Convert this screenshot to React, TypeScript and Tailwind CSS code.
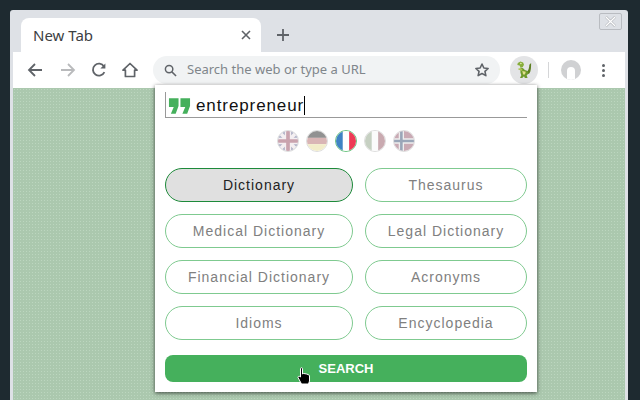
import React from "react";

const leftWords = ["Medical Dictionary", "Financial Dictionary", "Idioms"];
const rightWords = ["Legal Dictionary", "Acronyms", "Encyclopedia"];

const Flag = ({ children, active }: { children: React.ReactNode; active?: boolean }) => (
  <div className={`w-[22px] h-[22px] rounded-full border-[1.5px] overflow-hidden ${active ? "border-[#6cc481]" : "border-[#dddddd]"}`}>
    <svg viewBox="0 0 19 19" className="w-full h-full block">
      {children}
    </svg>
  </div>
);

const Pill = ({ label, active }: { label: string; active?: boolean }) => (
  <div
    className={`h-[34px] rounded-full border flex items-center justify-center text-[14px] tracking-[1px] ${
      active ? "bg-[#e0e0e0] border-[#1d8a3a] text-[#222]" : "bg-white border-[#7fca90] text-[#808080]"
    }`}
  >
    {label}
  </div>
);

export default function App() {
  return (
    <div className="relative w-[640px] h-[400px] overflow-hidden bg-[#1e2a30] pt-[10px] pl-[10px] font-['Noto_Sans',sans-serif]">
      <div className="w-[618px] h-[390px] rounded-t-[3px] bg-[#dee1e6] flex flex-col px-[3px]">
        {/* Tab strip */}
        <div className="h-[42px] flex items-end shrink-0 relative">
          <div className="ml-[8px] w-[240px] h-[34px] bg-white rounded-t-[8px] flex items-center pl-[12px] pr-[10px] text-[15px] text-[#3c4043]">
            <span>New Tab</span>
            <svg viewBox="0 0 10 10" className="ml-auto w-[10px] h-[10px]" stroke="#5f6368" strokeWidth="1.6">
              <path d="M1 1l8 8M9 1l-8 8" />
            </svg>
          </div>
          <svg viewBox="0 0 14 14" className="ml-[15px] mb-[10px] w-[14px] h-[14px]" stroke="#5f6368" strokeWidth="1.8">
            <path d="M7 1v12M1 7h12" />
          </svg>
          <div className="absolute right-[3px] top-[3px] w-[23px] h-[17px] border border-[#b9bcc1] rounded-[2px] flex items-center justify-center">
            <svg viewBox="0 0 12 12" className="w-[11px] h-[11px]" stroke="#fff" strokeWidth="1.5" fill="none">
              <path d="M1 1l10 10M11 1L1 11" stroke="#a9acb1" strokeWidth="2.6" />
              <path d="M1 1l10 10M11 1L1 11" />
            </svg>
          </div>
        </div>

        {/* Toolbar */}
        <div className="h-[36px] bg-white flex items-center shrink-0 text-[#5f6368]">
          <svg viewBox="0 0 16 16" className="ml-[14px] w-[16px] h-[16px]" fill="none" stroke="#5f6368" strokeWidth="1.8">
            <path d="M15 8H2M8 2L2 8l6 6" />
          </svg>
          <svg viewBox="0 0 16 16" className="ml-[17px] w-[16px] h-[16px]" fill="none" stroke="#b9babc" strokeWidth="1.8">
            <path d="M1 8h13M8 2l6 6-6 6" />
          </svg>
          <svg viewBox="0 0 16 16" className="ml-[15px] w-[16px] h-[16px]" fill="none" stroke="#5f6368" strokeWidth="1.8">
            <path d="M13.4 10.2A6 6 0 1 1 13 4.400" />
            <path d="M14.400 1.400v5h-5z" fill="#5f6368" stroke="none" />
          </svg>
          <svg viewBox="0 0 16 16" className="ml-[15px] w-[16px] h-[16px]" fill="none" stroke="#5f6368" strokeWidth="1.7">
            <path d="M8 1.500L1 8.200h2.400V14.500h9.200V8.200H15z" strokeLinejoin="round" />
          </svg>
          <div className="ml-[15px] w-[347px] h-[28px] rounded-full bg-[#f1f3f4] flex items-center pl-[11px] pr-[10px]">
            <svg viewBox="0 0 14 14" className="w-[13px] h-[13px]" fill="none" stroke="#5f6368" strokeWidth="1.6">
              <circle cx="5.500" cy="5.500" r="4" />
              <path d="M8.500 8.500l4.500 4.500" />
            </svg>
            <span className="ml-[10px] text-[13px] text-[#80868b]">Search the web or type a URL</span>
            <svg viewBox="0 0 24 24" className="ml-auto w-[16px] h-[16px]" fill="none" stroke="#5f6368" strokeWidth="2.400">
              <path d="M12 3l2.800 6 6.400.7-4.800 4.400 1.400 6.400-5.800-3.300-5.800 3.300 1.400-6.400L2.800 9.700l6.400-.7z" strokeLinejoin="round" />
            </svg>
          </div>
          <div className="ml-[10px] w-[28px] h-[28px] rounded-full bg-[#e3e4e6] flex items-center justify-center">
            <svg viewBox="0 0 18 20" className="w-[16px] h-[18px]">
              <path d="M12 12c2-1 3-5 3-8l2-2c0 4 0 9-2 12l-3 1z" fill="#5d7f22" />
              <path d="M5 7l3 1 2 2 3 1 1 3-2 2 1 3H10l-1-2-2 2H4.500l1.500-3-1-3z" fill="#6f9a2c" />
              <path d="M2 2l3-1.500 3 1L9 4 7.500 7H5L4 5 1.500 4.500z" fill="#86ad3a" />
              <circle cx="5.500" cy="2.600" r="0.800" fill="#f4f7c0" />
              <path d="M7 8.500L3 8 2.500 9.500 7 11z" fill="#a9c24f" />
              <path d="M7 11l1 4h2l1-3z" fill="#e2df8c" />
            </svg>
          </div>
          <div className="ml-[10px] w-px h-[16px] bg-[#d5d6d8]" />
          <div className="ml-[12px] w-[20px] h-[20px] rounded-full bg-[#d0d1d3] flex justify-center items-end overflow-hidden">
            <div className="w-[8px] h-[13px] rounded-t-full bg-white" />
          </div>
          <div className="ml-[21px] flex flex-col gap-[2px]">
            <div className="w-[3px] h-[3px] rounded-full bg-[#5f6368]" />
            <div className="w-[3px] h-[3px] rounded-full bg-[#5f6368]" />
            <div className="w-[3px] h-[3px] rounded-full bg-[#5f6368]" />
          </div>
        </div>

        {/* Page */}
        <div className="flex-1 bg-[#abc8ae] bg-[radial-gradient(#bcd6bf_1px,transparent_1px)] bg-[length:3px_3px]" />
      </div>

      {/* Extension popup */}
      <div className="absolute left-[155px] top-[85px] w-[382px] h-[307px] bg-white shadow-[0_1px_4px_rgba(0,0,0,0.65)] px-[10px] pt-[7px] font-['Liberation_Sans',sans-serif]">
        <div className="h-[26px] border-b border-[#999] border-l flex items-center pl-[2px] pt-[2px] text-[17px] tracking-[0.9px] text-[#111]">
          <svg viewBox="0 0 24 16" className="w-[23px] h-[16px] shrink-0" fill="#45b05c">
            <path d="M1 0h10v8l-3 8H3l3-7H1zM13 0h10v8l-3 8h-5l3-7h-5z" />
          </svg>
          <span className="ml-[5px]">entrepreneur</span>
          <span className="w-px h-[19px] bg-black" />
        </div>

        <div className="mt-[12px] flex justify-center gap-[7px]">
          <Flag>
            <rect width="19" height="19" fill="#aeb0c6" />
            <path d="M0 0l19 19M19 0L0 19" stroke="#f4eff1" strokeWidth="3.500" />
            <path d="M9.500 0v19M0 9.500h19" stroke="#f4eff1" strokeWidth="6" />
            <path d="M9.500 0v19M0 9.500h19" stroke="#c9a3ae" strokeWidth="3.500" />
          </Flag>
          <Flag>
            <rect width="19" height="6.500" fill="#919191" />
            <rect y="6.500" width="19" height="6" fill="#d9b5b5" />
            <rect y="12.500" width="19" height="6.500" fill="#f2ecc9" />
          </Flag>
          <Flag active>
            <rect width="6.500" height="19" fill="#3f83c4" />
            <rect x="6.500" width="6" height="19" fill="#fff" />
            <rect x="12.500" width="6.500" height="19" fill="#ee3a55" />
          </Flag>
          <Flag>
            <rect width="6.500" height="19" fill="#c6d0c2" />
            <rect x="6.500" width="6" height="19" fill="#fbfbfb" />
            <rect x="12.500" width="6.500" height="19" fill="#c9aab0" />
          </Flag>
          <Flag>
            <rect width="19" height="19" fill="#c9aab4" />
            <path d="M7 0v19M0 9.500h19" stroke="#eee" strokeWidth="5" />
            <path d="M7 0v19M0 9.500h19" stroke="#9aa6b8" strokeWidth="2.500" />
          </Flag>
        </div>

        <div className="mt-[16px] grid grid-cols-[188px_162px] gap-x-[12px] gap-y-[12px]">
          <Pill label="Dictionary" active />
          <Pill label="Thesaurus" />
          {leftWords.map((w, i) => (
            <React.Fragment key={w}>
              <Pill label={w} />
              <Pill label={rightWords[i]} />
            </React.Fragment>
          ))}
        </div>

        <div className="mt-[15px] h-[27px] rounded-[8px] bg-[#45b05c] flex items-center justify-center text-white text-[13px] font-bold">
          SEARCH
        </div>
      </div>

      {/* Mouse pointer */}
      <svg viewBox="0 0 16 18" className="absolute left-[297px] top-[367px] w-[16px] h-[18px]">
        <path
          d="M3.500 1.500c0-1 2-1 2 0V7l1-.5 1.500.2 1.500.3 1.500.5 1.500 1V14l-1 3H4.500L1 10.500c0-1.500 1.500-1.500 2.500-.5z"
          fill="#000"
          stroke="#fff"
          strokeWidth="1"
        />
      </svg>
    </div>
  );
}
